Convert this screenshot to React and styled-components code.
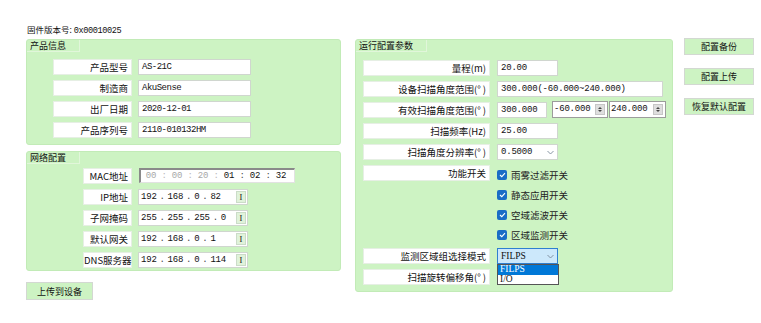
import React from 'react';
import styled, { createGlobalStyle } from 'styled-components';

const GlobalStyle = createGlobalStyle`
  body {
    margin: 0;
    background: #ffffff;
    font-family: "Noto Sans CJK SC", "Liberation Sans", sans-serif;
    color: #111;
  }
`;

const Page = styled.div`
  width: 761px;
  height: 323px;
  padding: 24px 0 0 26px;
  box-sizing: border-box;
`;

const Version = styled.div`
  height: 11px;
  font-size: 8.5px;
  line-height: 11px;
  margin-left: 1px;
  span {
    font-family: "Liberation Mono", monospace;
    font-size: 8.6px;
    letter-spacing: -0.4px;
    line-height: 11px;
  }
`;

const Main = styled.div`
  display: flex;
  align-items: flex-start;
  margin-top: 4px;
`;

const LeftCol = styled.div`
  display: flex;
  flex-direction: column;
  width: 315px;
  gap: 6px;
`;

const Panel = styled.section`
  position: relative;
  background: #cdf3c3;
  border: 1px solid #c2ebb7;
  border-radius: 3px;
  display: flex;
  flex-direction: column;
  gap: ${p => p.gap || 5}px;
  padding-bottom: ${p => p.pb || 6}px;
  width: ${p => p.width ? p.width + 'px' : 'auto'};
  box-sizing: border-box;
`;

const Tab = styled.div`
  align-self: flex-start;
  width: ${p => p.width}px;
  height: 12px;
  line-height: 12px;
  font-size: 9px;
  padding-left: 3px;
  box-sizing: border-box;
  border-right: 1px solid #e1f6da;
  border-bottom: 1px solid #e1f6da;
  border-top-left-radius: 3px;
  margin-bottom: ${p => p.mb}px;
`;

const Row = styled.div`
  display: flex;
  align-items: ${p => p.top ? 'flex-start' : 'center'};
  gap: ${p => p.gap || 6}px;
  padding-left: ${p => p.indent}px;
  min-height: 16px;
  position: relative;
`;

const Label = styled.div`
  width: ${p => p.width}px;
  height: 16px;
  background: #ffffff;
  border: 1px solid #e6efe4;
  box-sizing: border-box;
  font-size: 9.5px;
  line-height: 14px;
  text-align: right;
  padding-right: 3px;
  white-space: nowrap;
  flex-shrink: 0;
`;

const Input = styled.div`
  width: ${p => p.width}px;
  height: 16px;
  background: #ffffff;
  border: 1px solid #d0d6cf;
  box-sizing: border-box;
  font-family: "Liberation Mono", monospace;
  font-size: 9px;
  letter-spacing: ${p => p.tight ? -0.5 : -0.2}px;
  line-height: 14px;
  padding-left: 3px;
  white-space: nowrap;
  flex-shrink: 0;
`;

const SegInput = styled.div`
  display: flex;
  align-items: center;
  width: ${p => p.width}px;
  height: ${p => p.sunken ? 15 : 16}px;
  background: #ffffff;
  box-sizing: border-box;
  border: 1px solid ${p => p.sunken ? '#e2e2e2' : '#d0d6cf'};
  border-top-color: ${p => p.sunken ? '#8a8a8a' : '#d0d6cf'};
  border-left-color: ${p => p.sunken ? '#8a8a8a' : '#d0d6cf'};
  border-top-width: ${p => p.sunken ? 2 : 1}px;
  border-left-width: ${p => p.sunken ? 2 : 1}px;
  font-family: "Liberation Mono", monospace;
  font-size: 9px;
  letter-spacing: -0.2px;
  padding-left: ${p => p.pl || 3}px;
  align-self: flex-start;
`;

const Seg = styled.span`
  width: ${p => p.width ? p.width + 'px' : 'auto'};
  text-align: center;
  color: ${p => p.dim ? '#a8a8a8' : '#111'};
`;

const Sep = styled.span`
  width: ${p => p.width}px;
  text-align: center;
  color: ${p => p.dim ? '#b8b8b8' : '#444'};
`;

const IBtn = styled.span`
  margin-left: auto;
  margin-right: 1px;
  width: 10px;
  height: 12px;
  box-sizing: border-box;
  background: #e0f3da;
  border: 1px solid #cbdcc8;
  font-family: "Liberation Serif", serif;
  font-size: 8.5px;
  letter-spacing: 0;
  line-height: 10px;
  text-align: center;
`;

const Spinner = styled.div`
  display: flex;
  width: ${p => p.width}px;
  height: 17px;
  border: 1px solid #9c9c9c;
  background: #ffffff;
  box-sizing: border-box;
  align-self: flex-start;
  margin-top: -1px;
  margin-left: ${p => p.ml || 0}px;
  span {
    flex: 1;
    font-family: "Liberation Mono", monospace;
    font-size: 9px;
    letter-spacing: -0.2px;
    line-height: 14px;
    padding-left: 1px;
  }
`;

const SpinBtns = styled.div`
  width: 8px;
  display: flex;
  flex-direction: column;
  justify-content: center;
  gap: 1px;
  margin: 2px 2px 2px 0;
  background: #dedede;
  border: 1px solid #c6c6c6;
  align-items: center;
  i {
    width: 0;
    height: 0;
    border-left: 2px solid transparent;
    border-right: 2px solid transparent;
  }
  i:first-child { border-bottom: 2px solid #444; }
  i:last-child { border-top: 2px solid #444; }
`;

const Combo = styled.div`
  width: 61px;
  height: 16px;
  box-sizing: border-box;
  display: flex;
  align-items: center;
  justify-content: space-between;
  padding: 0 3px;
  background: ${p => p.active ? '#cce8fb' : '#ffffff'};
  border: 1px solid ${p => p.active ? '#2f7fd0' : '#d0d6cf'};
  font-family: ${p => p.serif ? '"Liberation Serif", serif' : '"Liberation Mono", monospace'};
  font-size: ${p => p.serif ? 9.5 : 9}px;
  letter-spacing: ${p => p.serif ? 0 : -0.2}px;
  position: relative;
  svg { flex-shrink: 0; }
`;

const DropList = styled.div`
  position: absolute;
  left: -1px;
  top: 15px;
  width: 62px;
  background: #ffffff;
  border: 1px solid #555;
  box-sizing: border-box;
  z-index: 2;
`;

const DropItem = styled.div`
  height: 9.5px;
  line-height: 9.5px;
  padding-left: 2px;
  font-family: "Liberation Serif", serif;
  font-size: 9.5px;
  background: ${p => p.selected ? '#0078d7' : '#ffffff'};
  color: ${p => p.selected ? '#ffffff' : '#111'};
`;

const CheckList = styled.div`
  display: flex;
  flex-direction: column;
  gap: 4px;
  padding-top: 2px;
`;

const Check = styled.div`
  display: flex;
  align-items: center;
  gap: 4px;
  height: 16px;
  font-size: 9.5px;
  color: #222;
`;

const Box = styled.span`
  width: 10px;
  height: 10px;
  border-radius: 2px;
  background: #1a6cc6;
  display: flex;
  align-items: center;
  justify-content: center;
`;

const Button = styled.button`
  width: ${p => p.width}px;
  height: ${p => p.h || 17}px;
  padding: 0;
  background: #cdf3c3;
  border: 1px solid #d3d8d2;
  font-family: "Noto Sans CJK SC", sans-serif;
  font-size: 9px;
  color: #111;
  margin-top: ${p => p.mt || 0}px;
`;

const MidWrap = styled.div`
  margin-left: 14px;
`;

const ButtonCol = styled.div`
  display: flex;
  flex-direction: column;
  gap: 13px;
  margin-left: 11px;
  margin-top: -1px;
`;

const Chevron = () => (
  <svg width="7" height="5" viewBox="0 0 7 5">
    <path d="M0.5 1 L3.5 4 L6.5 1" fill="none" stroke="#7a8a9a" strokeWidth="0.9" />
  </svg>
);

const Tick = () => (
  <svg width="7" height="6" viewBox="0 0 7 6">
    <path d="M1 3 L2.8 4.7 L6 1.2" fill="none" stroke="#ffffff" strokeWidth="1.1" />
  </svg>
);

const IpField = ({ value }) => (
  <SegInput width={110} pl={2}>
    {value.split('.').map((p, i) => (
      <React.Fragment key={i}>
        {i > 0 && <Sep width={11}>.</Sep>}
        <Seg>{p}</Seg>
      </React.Fragment>
    ))}
    <IBtn>I</IBtn>
  </SegInput>
);

const mac = ['00', '00', '20', '01', '02', '32'];

export default function App() {
  return (
    <Page>
      <GlobalStyle />
      <Version>固件版本号: <span>0x00010025</span></Version>
      <Main>
        <LeftCol>
          <Panel pb={6}>
            <Tab width={53} mb={2}>产品信息</Tab>
            <Row indent={26}>
              <Label width={79}>产品型号</Label>
              <Input width={113} tight>AS-21C</Input>
            </Row>
            <Row indent={26}>
              <Label width={79}>制造商</Label>
              <Input width={113} tight>AkuSense</Input>
            </Row>
            <Row indent={26}>
              <Label width={79}>出厂日期</Label>
              <Input width={113} tight>2020-12-01</Input>
            </Row>
            <Row indent={26}>
              <Label width={79}>产品序列号</Label>
              <Input width={113} tight>2110-010132HM</Input>
            </Row>
          </Panel>
          <Panel pb={2}>
            <Tab width={53} mb={-1}>网络配置</Tab>
            <Row indent={56} gap={7}>
              <Label width={49}>MAC地址</Label>
              <SegInput width={156} sunken pl={2}>
                {mac.map((m, i) => (
                  <React.Fragment key={i}>
                    {i > 0 && <Sep width={10} dim={i < 4}>:</Sep>}
                    <Seg width={16} dim={i < 3}>{m}</Seg>
                  </React.Fragment>
                ))}
              </SegInput>
            </Row>
            <Row indent={56} gap={6}>
              <Label width={49}>IP地址</Label>
              <IpField value="192.168.0.82" />
            </Row>
            <Row indent={56} gap={6}>
              <Label width={49}>子网掩码</Label>
              <IpField value="255.255.255.0" />
            </Row>
            <Row indent={56} gap={6}>
              <Label width={49}>默认网关</Label>
              <IpField value="192.168.0.1" />
            </Row>
            <Row indent={56} gap={6}>
              <Label width={49}>DNS服务器</Label>
              <IpField value="192.168.0.114" />
            </Row>
          </Panel>
          <Button width={67} h={18} mt={5}>上传到设备</Button>
        </LeftCol>
        <MidWrap>
          <Panel width={318} pb={6}>
            <Tab width={71} mb={3}>运行配置参数</Tab>
            <Row indent={7} gap={7}>
              <Label width={127}>量程(m)</Label>
              <Input width={61}>20.00</Input>
            </Row>
            <Row indent={7} gap={7}>
              <Label width={127}>设备扫描角度范围(° )</Label>
              <Input width={166}>300.000(-60.000~240.000)</Input>
            </Row>
            <Row indent={7} gap={7}>
              <Label width={127}>有效扫描角度范围(° )</Label>
              <Input width={50}>300.000</Input>
              <Spinner width={56} ml={-2}><span>-60.000</span><SpinBtns><i /><i /></SpinBtns></Spinner>
              <Spinner width={57} ml={-6}><span>240.000</span><SpinBtns><i /><i /></SpinBtns></Spinner>
            </Row>
            <Row indent={7} gap={7}>
              <Label width={127}>扫描频率(Hz)</Label>
              <Input width={61}>25.00</Input>
            </Row>
            <Row indent={7} gap={7}>
              <Label width={127}>扫描角度分辨率(° )</Label>
              <Combo>0.5000<Chevron /></Combo>
            </Row>
            <Row indent={7} gap={7} top>
              <Label width={127}>功能开关</Label>
              <CheckList>
                <Check><Box><Tick /></Box>雨雾过滤开关</Check>
                <Check><Box><Tick /></Box>静态应用开关</Check>
                <Check><Box><Tick /></Box>空域滤波开关</Check>
                <Check><Box><Tick /></Box>区域监测开关</Check>
              </CheckList>
            </Row>
            <Row indent={7} gap={7}>
              <Label width={127}>监测区域组选择模式</Label>
              <Combo active serif>
                FILPS<Chevron />
                <DropList>
                  <DropItem selected>FILPS</DropItem>
                  <DropItem>I/O</DropItem>
                </DropList>
              </Combo>
            </Row>
            <Row indent={7} gap={7}>
              <Label width={127}>扫描旋转偏移角(° )</Label>
            </Row>
          </Panel>
        </MidWrap>
        <ButtonCol>
          <Button width={70}>配置备份</Button>
          <Button width={70}>配置上传</Button>
          <Button width={70}>恢复默认配置</Button>
        </ButtonCol>
      </Main>
    </Page>
  );
}
